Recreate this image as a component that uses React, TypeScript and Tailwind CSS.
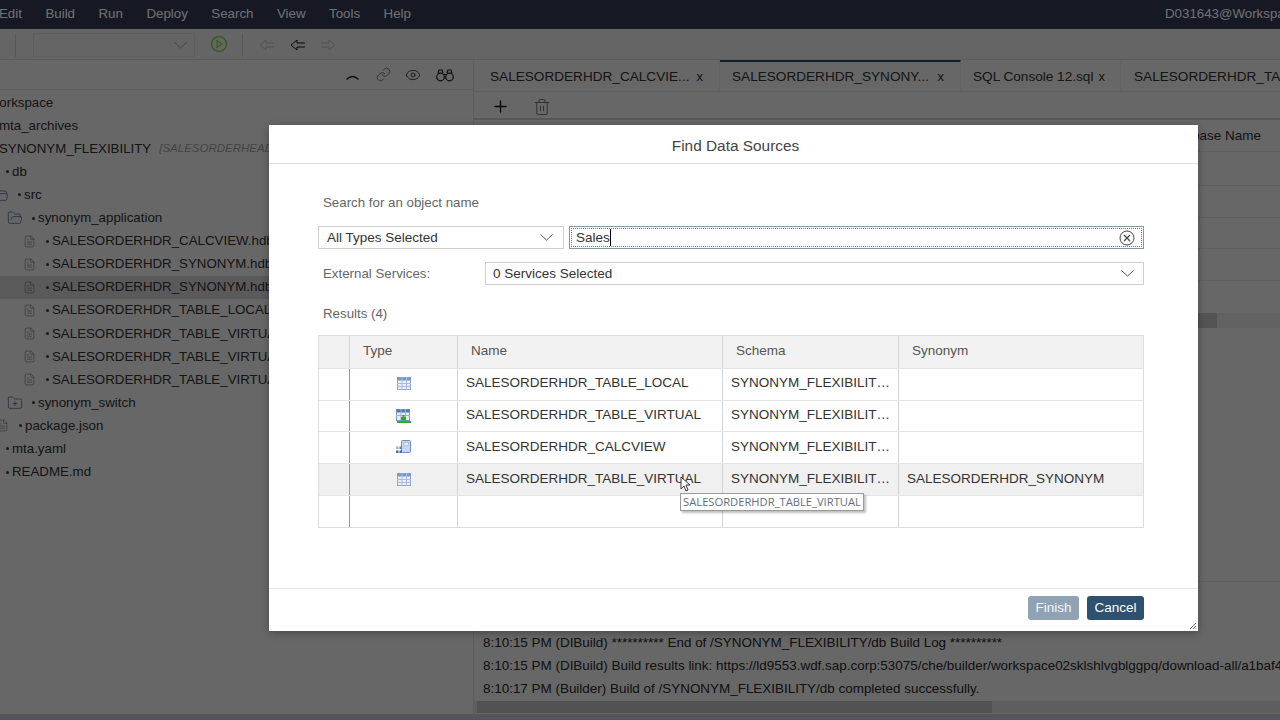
import React from "react";
import { Link, Eye, Plus, Trash2, FolderOpen, FolderPlus, FileText } from "lucide-react";

const menu = ["Edit", "Build", "Run", "Deploy", "Search", "View", "Tools", "Help"];

function Chev({ color = "#444" }: { color?: string }) {
  return (
    <svg width="13" height="7" viewBox="0 0 13 7" fill="none" stroke={color} strokeWidth="0.900" className="shrink-0">
      <path d="M0.500 0.500L6.500 6L12.500 0.500" />
    </svg>
  );
}

function Bullet() {
  return <span className="mr-[3px] inline-block h-[3px] w-[3px] shrink-0 rounded-full bg-[#333]" />;
}

function Row({ pad, icon, text, extra, active, bullet = true }: { pad: string; icon?: "open" | "plus" | "file"; text: string; extra?: string; active?: boolean; bullet?: boolean }) {
  return (
    <div className={`flex h-[23.1px] items-center whitespace-nowrap ${pad} ${active ? "bg-[#b4b4b4]" : ""}`}>
      {icon === "open" && <FolderOpen size={16} strokeWidth={1} className="mr-[9px] shrink-0 text-[#29496b]" />}
      {icon === "plus" && <FolderPlus size={16} strokeWidth={1} className="mr-[9px] shrink-0 text-[#29496b]" />}
      {icon === "file" && <FileText size={13} strokeWidth={1} className="mr-[10px] shrink-0 text-[#555]" />}
      {bullet && <Bullet />}
      {text}
      {extra && <span className="ml-[8px] text-[11.500px] italic text-[#888]">{extra}</span>}
    </div>
  );
}

function Tab({ label, active, w, pl, pr, close = true }: { label: string; active?: boolean; w: string; pl: string; pr: string; close?: boolean }) {
  return (
    <div className={`flex h-full shrink-0 items-center justify-between border-r border-[#c4c4c4] pt-[1px] text-[13.600px] ${pl} ${pr} ${w} ${active ? "border-t-2 border-t-[#27405f]" : "border-t-2 border-t-transparent"}`}>
      <span className="whitespace-nowrap">{label}</span>
      {close && <span className="text-[13px]">x</span>}
    </div>
  );
}

function TableIcon() {
  return (
    <svg width="14" height="13" viewBox="0 0 14 13">
      <rect x="0.5" y="0.5" width="13" height="12" fill="#e8eef8" stroke="#8fa6cf" />
      <rect x="0.5" y="0.5" width="13" height="3" fill="#7a96c8" />
      <path d="M5 0v13M9.500 0v13M0 6.500h14M0 9.500h14" stroke="#a9bcdc" />
    </svg>
  );
}

function VirtualIcon() {
  return (
    <svg width="15" height="14" viewBox="0 0 15 14">
      <rect x="0.5" y="0.5" width="13" height="11" fill="#e8eef8" stroke="#7f9cc4" />
      <rect x="0.500" y="0.500" width="13" height="3" fill="#4f7bb0" />
      <path d="M5 0v11M9.500 0v11M0 6.500h14" stroke="#9db2d6" />
      <path d="M1 13h14" stroke="#2fa82f" strokeWidth="2" />
      <path d="M5 11.500h5V8H8.500V6h-2v2H5z" fill="#2fa82f" />
    </svg>
  );
}

function CalcIcon() {
  return (
    <svg width="15" height="14" viewBox="0 0 15 14">
      <rect x="5.500" y="0.500" width="9" height="12" rx="1" fill="#c9d6ea" stroke="#6d8fc0" />
      <rect x="8" y="2.500" width="4.500" height="3" fill="#eef2f8" stroke="#7f9cc4" strokeWidth="0.500" />
      <rect x="0" y="6.500" width="2.500" height="2.500" fill="#5e80bd" opacity="0.6" />
      <rect x="3.500" y="6.500" width="2.500" height="2.500" fill="#5e80bd" />
      <rect x="0" y="10.500" width="2.500" height="2.500" fill="#3f69ad" />
      <rect x="3.500" y="10.500" width="2.500" height="2.500" fill="#3f69ad" />
    </svg>
  );
}

function Binoculars() {
  return (
    <svg width="18" height="14" viewBox="0 0 18 14" fill="none" stroke="currentColor" strokeWidth="1.200">
      <circle cx="4.500" cy="9" r="3.800" />
      <circle cx="13.500" cy="9" r="3.800" />
      <path d="M2 5.500L3 2h3l1 3M16 5.500L15 2h-3l-1 3M7.500 6.500h3" />
    </svg>
  );
}

const results = [
  { icon: <TableIcon />, name: "SALESORDERHDR_TABLE_LOCAL", syn: "", h: "h-[32px]", pb: "pb-[2px]" },
  { icon: <VirtualIcon />, name: "SALESORDERHDR_TABLE_VIRTUAL", syn: "", h: "h-[31px]", pb: "pb-[1px]" },
  { icon: <CalcIcon />, name: "SALESORDERHDR_CALCVIEW", syn: "", h: "h-[32px]", pb: "pb-[1px]" },
  { icon: <TableIcon />, name: "SALESORDERHDR_TABLE_VIRTUAL", syn: "SALESORDERHDR_SYNONYM", h: "h-[32px]", pb: "pb-[1px]", hover: true },
];

const gridCols = "grid grid-cols-[31px_108px_265px_176px_1fr]";
const cellB = "border-r border-[#d4d4d4]";

export default function App() {
  return (
    <div className="relative flex h-[720px] w-[1280px] flex-col overflow-hidden bg-[#cecece] font-['Liberation_Sans',Arial,sans-serif] text-[13.300px] text-[#2a2a2a]">
      {/* Menu bar */}
      <div className="flex h-[29px] shrink-0 items-center justify-between bg-[#2c3146] pb-[1px] text-[#dfe2e8]">
        <div className="ml-[-1px] flex gap-[23.500px]">
          {menu.map((m) => (
            <span key={m}>{m}</span>
          ))}
        </div>
        <span className="w-[115px] overflow-hidden whitespace-nowrap">D031643@Workspace</span>
      </div>

      {/* Toolbar */}
      <div className="flex h-[31px] shrink-0 items-center border-b border-[#b8b8b8] bg-[#cbcbcb] pt-[2px]">
        <div className="ml-[15px] h-[23px] w-px bg-[#b0b0b0]" />
        <div className="ml-[17px] flex h-[24px] w-[162px] items-center justify-end border border-[#bdbdbd] pr-[7px]">
          <Chev color="#777" />
        </div>
        <svg width="18" height="18" viewBox="0 0 18 18" className="mb-[2px] ml-[15px]">
          <circle cx="9" cy="9" r="7.500" fill="none" stroke="#6fb83a" strokeWidth="1.600" />
          <path d="M7 5.500l5 3.500-5 3.500z" fill="none" stroke="#6fb83a" strokeWidth="1.300" />
        </svg>
        <div className="ml-[14px] h-[23px] w-px bg-[#b0b0b0]" />
        <svg width="16" height="12" viewBox="0 0 16 12" className="ml-[16px] text-[#a0a0a0]">
          <path d="M7 1L1 6l6 5V8h8M7 1v3h8" fill="none" stroke="currentColor" />
        </svg>
        <svg width="16" height="12" viewBox="0 0 16 12" className="ml-[15px] text-[#111]">
          <path d="M7 1L1 6l6 5V8h8M7 1v3h8" fill="none" stroke="currentColor" />
        </svg>
        <svg width="16" height="12" viewBox="0 0 16 12" className="ml-[14px] text-[#a0a0a0]">
          <path d="M9 1l6 5-6 5V8H1M9 1v3H1" fill="none" stroke="currentColor" />
        </svg>
      </div>

      <div className="flex min-h-0 flex-1">
        {/* Left panel */}
        <div className="flex w-[474px] shrink-0 flex-col border-r border-[#bdbdbd]">
          <div className="flex h-[30px] shrink-0 items-center justify-end border-b border-[#bbb] pr-[19px] text-[#1c1c1c]">
            <svg width="13" height="6" viewBox="0 0 13 6" fill="none" stroke="currentColor" strokeWidth="1.300" className="mt-[4px]">
              <path d="M0.500 5.500Q6.500 -0.500 12.500 5.500" />
            </svg>
            <Link size={15} strokeWidth={1.100} className="ml-[17px] text-[#333]" />
            <Eye size={16} strokeWidth={1.200} className="ml-[14px]" />
            <span className="ml-[15px]"><Binoculars /></span>
          </div>
          <div className="overflow-hidden pt-[1px]">
            <Row pad="ml-[-13px]" text="Workspace" bullet={false} />
            <Row pad="ml-[-1px]" text="mta_archives" bullet={false} />
            <Row pad="ml-[-1px]" text="SYNONYM_FLEXIBILITY" extra="[SALESORDERHEADER_SYNONYM]" bullet={false} />
            <Row pad="pl-[6px]" text="db" />
            <Row pad="ml-[-7px]" icon="open" text="src" />
            <Row pad="pl-[7px]" icon="open" text="synonym_application" />
            <Row pad="pl-[23px]" icon="file" text="SALESORDERHDR_CALCVIEW.hdbcalculationview" />
            <Row pad="pl-[23px]" icon="file" text="SALESORDERHDR_SYNONYM.hdbsynonym" />
            <Row pad="pl-[23px]" icon="file" text="SALESORDERHDR_SYNONYM.hdbsynonymconfig" active />
            <Row pad="pl-[23px]" icon="file" text="SALESORDERHDR_TABLE_LOCAL.hdbtable" />
            <Row pad="pl-[23px]" icon="file" text="SALESORDERHDR_TABLE_VIRTUAL.hdbvirtualtable" />
            <Row pad="pl-[23px]" icon="file" text="SALESORDERHDR_TABLE_VIRTUAL.hdbvirtualtableconfig" />
            <Row pad="pl-[23px]" icon="file" text="SALESORDERHDR_TABLE_VIRTUAL.txt" />
            <Row pad="pl-[7px]" icon="plus" text="synonym_switch" />
            <Row pad="ml-[-4px]" icon="file" text="package.json" />
            <Row pad="pl-[6px]" text="mta.yaml" />
            <Row pad="pl-[6px]" text="README.md" />
          </div>
        </div>

        {/* Right panel */}
        <div className="flex min-w-0 flex-1 flex-col">
          <div className="flex h-[32px] shrink-0 overflow-hidden border-b border-[#c0c0c0] pl-[3px]">
            <Tab label="SALESORDERHDR_CALCVIE..." w="w-[243px]" pl="pl-[13px]" pr="pr-[16px]" />
            <Tab label="SALESORDERHDR_SYNONY..." active w="w-[241px]" pl="pl-[12px]" pr="pr-[16px]" />
            <Tab label="SQL Console 12.sql" w="w-[160px]" pl="pl-[12px]" pr="pr-[15px]" />
            <Tab label="SALESORDERHDR_TABLE_LOCAL" w="w-[200px]" pl="pl-[13px]" pr="pr-0" close={false} />
          </div>
          <div className="flex h-[28px] shrink-0 items-center border-b-2 border-[#b0b0b0] pl-[17px] pt-[3px]">
            <Plus size={19} strokeWidth={1.700} className="text-[#111]" />
            <Trash2 size={18} strokeWidth={1} className="ml-[23px] text-[#444]" />
          </div>
          <div className="flex h-[32px] shrink-0 items-center justify-end border-b border-[#bcbcbc] pr-[19px] pt-[2px]">
            <span className="whitespace-nowrap text-[13.500px]">Database Name</span>
          </div>
          <div className="flex flex-1 flex-col">
            <div className="h-[34px] shrink-0 border-b border-[#bcbcbc]" />
            <div className="h-[32px] shrink-0 border-b border-[#bcbcbc]" />
            <div className="h-[31px] shrink-0 border-b border-[#bcbcbc]" />
            <div className="h-[32px] shrink-0 border-b border-[#bcbcbc]" />
            <div className="h-[32px] shrink-0" />
            <div className="h-[15px] shrink-0 bg-[#c4c4c4] pl-[560px]">
              <div className="h-full w-[183px] bg-[#a8a8a8]" />
            </div>
            <div className="h-[254px] shrink-0 border-b border-[#bcbcbc]" />
            <div className="h-[50px] shrink-0" />
            <div className="flex flex-col gap-[2px] pl-[9px] text-[13.450px] text-[#222]">
              <div className="h-[21px] whitespace-nowrap leading-[21px]">8:10:15 PM (DIBuild) ********** End of /SYNONYM_FLEXIBILITY/db Build Log **********</div>
              <div className="h-[21px] whitespace-nowrap leading-[21px]">8:10:15 PM (DIBuild) Build results link: https://ld9553.wdf.sap.corp:53075/che/builder/workspace02sklshlvgblggpq/download-all/a1baf4c</div>
              <div className="h-[21px] whitespace-nowrap leading-[21px]">8:10:17 PM (Builder) Build of /SYNONYM_FLEXIBILITY/db completed successfully.</div>
            </div>
            <div className="mt-[2px] h-[12px] shrink-0 bg-[#bcbcbc] pl-[3px]">
              <div className="h-full w-[515px] bg-[#a4a4a4]" />
            </div>
          </div>
        </div>
      </div>
      <div className="h-[6px] shrink-0 bg-[#a8a8ba]" />

      {/* Modal scrim */}
      <div className="absolute inset-0 bg-black/50" />

      {/* Dialog */}
      <div className="absolute left-[269px] top-[125px] flex h-[506px] w-[929px] flex-col bg-white text-[13.500px] text-[#333] shadow-[0_2px_8px_rgba(0,0,0,0.3)]">
        <div className="flex h-[39px] shrink-0 items-center justify-center border-b border-[#e0e0e0] pl-[4px] pt-[4px] text-[15.400px] text-[#444]">
          Find Data Sources
        </div>
        <div className="flex flex-1 flex-col pl-[49px] pr-[54px] pt-[31px]">
          <div className="ml-[5px] h-[16px] text-[13.300px] leading-[16px] text-[#666]">Search for an object name</div>
          <div className="mt-[15px] flex h-[23px] gap-[5px]">
            <div className="flex w-[246px] items-center justify-between border border-[#cfcfcf] pl-[8px] pr-[10px]">
              <span className="pt-[1px]">All Types Selected</span>
              <Chev />
            </div>
            <div className="flex flex-1 items-center justify-between border border-[#7f98a8] pl-[1px] pr-[1px]">
              <div className="flex h-[19px] flex-1 items-center justify-between border border-dotted border-[#777] pl-[4px] pr-[6px]">
                <span className="border-r border-black pt-[1px] leading-[16px]">Sales</span>
                <svg width="16" height="16" viewBox="0 0 16 16" fill="none" stroke="#444">
                  <circle cx="8" cy="8" r="7" />
                  <path d="M5 5l6 6M11 5l-6 6" strokeWidth="1.200" />
                </svg>
              </div>
            </div>
          </div>
          <div className="mt-[13px] flex h-[23px] items-center">
            <span className="ml-[5px] w-[162px] text-[13.300px] text-[#666]">External Services:</span>
            <div className="flex h-full flex-1 items-center justify-between border border-[#cfcfcf] pl-[7px] pr-[9px]">
              <span className="pt-[1px]">0 Services Selected</span>
              <Chev />
            </div>
          </div>
          <div className="ml-[5px] mt-[21px] h-[16px] text-[13.300px] leading-[16px] text-[#666]">Results (4)</div>

          <div className="mt-[13px] border border-[#dcdcdc]">
            <div className={`${gridCols} h-[33px] border-b border-[#e4e4e4] bg-[#f2f2f2] text-[#555]`}>
              <div className={cellB} />
              <div className={`${cellB} flex items-center pb-[2px] pl-[13px]`}>Type</div>
              <div className={`${cellB} flex items-center pb-[2px] pl-[13px]`}>Name</div>
              <div className={`${cellB} flex items-center pb-[2px] pl-[13px]`}>Schema</div>
              <div className="flex items-center pb-[2px] pl-[13px]">Synonym</div>
            </div>
            {results.map((r, i) => (
              <div key={i} className={`${gridCols} ${r.h} border-b border-[#e4e4e4] ${r.hover ? "bg-[#f0f0f0]" : ""}`}>
                <div className="border-r border-[#999]" />
                <div className={`${cellB} flex items-center justify-center ${r.pb}`}>{r.icon}</div>
                <div className={`${cellB} flex items-center overflow-hidden whitespace-nowrap ${r.pb} pl-[8px]`}>{r.name}</div>
                <div className={`${cellB} flex items-center overflow-hidden whitespace-nowrap ${r.pb} pl-[8px]`}>SYNONYM_FLEXIBILIT…</div>
                <div className={`flex items-center overflow-hidden whitespace-nowrap ${r.pb} pl-[8px]`}>{r.syn}</div>
              </div>
            ))}
            <div className={`${gridCols} h-[31px]`}>
              <div className="border-r border-[#999]" />
              <div className={cellB} />
              <div className={cellB} />
              <div className={cellB} />
              <div />
            </div>
          </div>
        </div>
        <div className="flex h-[43px] shrink-0 items-start justify-end gap-[8px] border-t border-[#e6e6e6] pr-[54px] pt-[7px]">
          <div className="flex h-[24px] w-[51px] items-center justify-center rounded-[3px] bg-[#8fa3b4] text-[#f4f6f8]">Finish</div>
          <div className="flex h-[24px] w-[57px] items-center justify-center rounded-[3px] bg-[#2f5170] text-white">Cancel</div>
        </div>
        <svg width="8" height="8" viewBox="0 0 8 8" className="absolute bottom-[1px] right-[1px]" stroke="#666">
          <path d="M1 7l6-6M4 7l3-3M6.500 7l.5-.5" />
        </svg>
      </div>

      {/* Tooltip */}
      <div className="absolute left-[680px] top-[493px] flex h-[18px] w-[184px] items-center justify-center whitespace-nowrap border border-[#999] bg-white font-['Open_Sans',sans-serif] text-[11.200px] text-[#66707a] shadow-[2px_2px_2px_rgba(0,0,0,0.25)]">
        SALESORDERHDR_TABLE_VIRTUAL
      </div>

      {/* Pointer */}
      <svg width="11" height="16" viewBox="0 0 11 16" className="absolute left-[680px] top-[476px]">
        <path d="M1 1v12l3-3 2 5 2-1-2-5h4z" fill="#fff" stroke="#222" strokeWidth="0.900" />
      </svg>
    </div>
  );
}
